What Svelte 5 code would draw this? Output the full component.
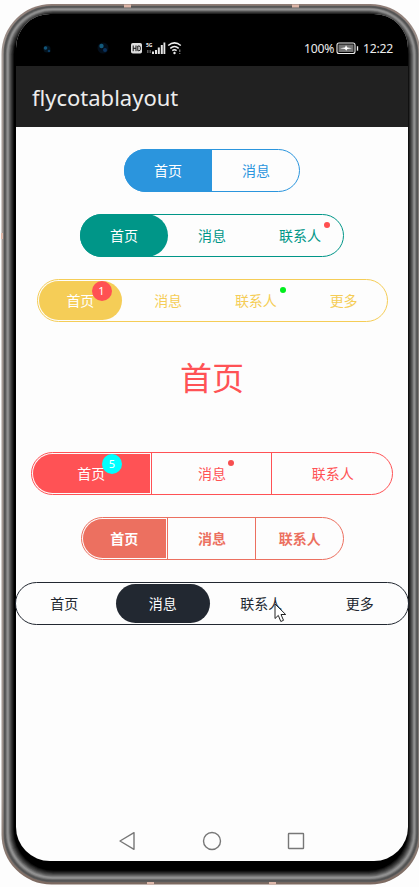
<script>
  const rows = [
    { w: 176, c: '#2b95dd', tabs: ['首页', '消息'], active: 0, inset: 0, shape: 'segment', divider: true },
    { w: 264, c: '#009688', tabs: ['首页', '消息', '联系人'], active: 0, inset: 0, shape: 'pill', marks: { 2: { x: 67.5, color: '#ff4f50' } } },
    { w: 351, c: '#f5cd57', tabs: ['首页', '消息', '联系人', '更多'], active: 0, inset: 2, shape: 'pill',
      marks: { 0: { x: 66, color: '#ff5153', count: 1 }, 2: { x: 67.5, color: '#00ee1c' } } },
    { w: 362, c: '#ff5255', tabs: ['首页', '消息', '联系人'], active: 0, inset: 2, shape: 'segment', divider: true,
      marks: { 0: { x: 82, color: '#00ffff', count: 5 }, 1: { x: 76.5, color: '#f74f50' } } },
    { w: 263, c: '#ec7060', tabs: ['首页', '消息', '联系人'], active: 0, inset: 2, shape: 'segment', divider: true, bold: true },
    { w: 394, c: '#222831', tabs: ['首页', '消息', '联系人', '更多'], active: 1, inset: 2, shape: 'pill' }
  ];

  // Metallic edge, from the outer rim to the black bezel: [inset, brightness]
  const rings = [
    [2, 98], [2.7, 82], [3.5, 88], [4.3, 112], [5.1, 138], [5.9, 148], [6.7, 130], [7.5, 108],
    [8.2, 90], [8.9, 72], [9.6, 58], [10.3, 44], [11, 30], [11.7, 16], [12.4, 0]
  ];
</script>

{#snippet tabBar(row)}
  <div class="bar {row.shape}" class:divided={row.divider} class:bold={row.bold}
    style="width:{row.w}px;--c:{row.c};--inset:{row.inset}px">
    {#each row.tabs as tab, i}
      <div class="tab" class:active={i === row.active}>
        <span>{tab}</span>
        {#if row.marks?.[i]}
          <i class="mark" class:count={row.marks[i].count} style="left:{row.marks[i].x}px;background:{row.marks[i].color}">{row.marks[i].count ?? ''}</i>
        {/if}
      </div>
    {/each}
  </div>
{/snippet}

<div class="stage">
  <svg class="frame" width="419" height="887" viewBox="0 0 419 887">
    <defs>
      <linearGradient id="rim" x1="0" y1="0" x2="0" y2="1">
        <stop offset="0" stop-color="#8d7b74" /><stop offset=".06" stop-color="#a59b96" />
        <stop offset=".9" stop-color="#a0958f" /><stop offset="1" stop-color="#7c6960" />
      </linearGradient>
    </defs>
    <rect x="1.5" y="4" width="419" height="880.5" rx="50" fill="url(#rim)" />
    {#each rings as [d, v]}
      <rect x={1.5 + d} y={4 + d * 0.85} width={419 - d * 2} height={880.5 - d * 1.95} rx={50 - d * 0.8} fill="rgb({v},{v},{v})" />
    {/each}
    <path d="M124 4.5h7v3h-7zM292 4.5h7v3h-7zM147 882h7v2.5h-7zM269 882h7v2.5h-7zM1 233h2v6H1z" fill="#dcb6a8" />
  </svg>

  <div class="phone">
    <header class="status">
      <svg class="lens" width="70" height="20" viewBox="0 0 70 20">
        <circle cx="6" cy="11" r="3.5" fill="#03131f" /><circle cx="4.5" cy="10" r="1.8" fill="#125478" /><circle cx="8" cy="13" r="1.3" fill="#083a62" />
        <circle cx="62" cy="10" r="5.5" fill="#030e1a" /><circle cx="60.5" cy="8" r="2.2" fill="#125a7c" /><circle cx="64" cy="12" r="2" fill="#0a315c" />
      </svg>
      <svg class="signal" width="52" height="14" viewBox="0 0 52 14">
        <rect x="0" y="2" width="11" height="10.5" rx="1.8" fill="#ddd" />
        <path d="M2.2 4.500v5.700M5 4.500v5.700M2.200 7.300H5M6.800 5v4.700h1q1.500 0 1.500-1.200V6.200Q9.300 5 7.800 5z" stroke="#111" stroke-width="1" fill="none" />
        <text x="15" y="5.800" font-size="5.800" font-weight="700" fill="#eee" textLength="6.500" lengthAdjust="spacingAndGlyphs">5G</text>
        <path d="M16 9h1.500v3H16zM18.500 9H20v3h-1.500z" fill="#555" />
        <path d="M21 10.500h2V13h-2zM24 9h2v4h-2zM26.800 6.500h2V13h-2zM29.800 4h2v9h-2zM32.500 1.500h1.800V13h-1.800z" fill="#e5e5e5" />
        <path d="M37.200 4.500q6.300-5.300 12.600 0M39.300 7.300q4.200-3.400 8.400 0M41.300 9.700q2.200-1.700 4.300 0" stroke="#eee" stroke-width="1.500" fill="none" />
        <circle cx="43.500" cy="12" r="1.200" fill="#eee" /><path d="M48.800 8.500v2.500M48.800 12v1" stroke="#999" stroke-width="1" />
      </svg>
      <span class="percent">100%</span>
      <svg class="battery" width="23" height="13" viewBox="0 0 23 13">
        <rect x="1" y="1" width="18" height="10.500" rx="2" fill="#000" stroke="#eee" stroke-width="1.100" />
        <rect x="2.500" y="2.500" width="15" height="7.500" fill="#737373" />
        <path d="M4 6.200l5-.8 1-2.200 1.300 2.200 4.700.8-4.700.8-1 1.800L9 7z" fill="#fff" /><path d="M21.500 4.200v4.500" stroke="#eee" stroke-width="1.300" />
      </svg>
      <span class="clock">12:22</span>
    </header>
    <div class="title"><span>flycotablayout</span></div>
    <main>
      {#each rows.slice(0, 3) as row}{@render tabBar(row)}{/each}
      <div class="page">首页</div>
      {#each rows.slice(3) as row}{@render tabBar(row)}{/each}
    </main>
    <footer>
      <svg width="18" height="20" viewBox="0 0 18 20"><path d="M2 10L16 1.700v16.600z" /></svg>
      <svg width="20" height="20" viewBox="0 0 20 20"><circle cx="10" cy="10" r="8.500" /></svg>
      <svg width="18" height="20" viewBox="0 0 18 20"><rect x="1.500" y="2.500" width="15" height="15" rx=".5" /></svg>
    </footer>
  </div>

  <svg class="cursor" width="14" height="20" viewBox="0 0 14 20">
    <path d="M1 1v14.500l3.300-3.100L6.800 18.500l2.700-1.200L7 11.500h4.700z" fill="#fff" stroke="#222" stroke-width="1" />
  </svg>
</div>

<style>
  .stage {
    position: relative;
    width: 419px;
    height: 887px;
    overflow: hidden;
    box-sizing: border-box;
    padding: 14px 0 0 16px;
    background: #fdfdfd;
    font-family: "Noto Sans", "Noto Sans CJK SC", sans-serif;
  }
  .frame { position: absolute; left: 0; top: 0; }
  .phone {
    position: relative;
    display: flex;
    flex-direction: column;
    width: 392px;
    height: 847px;
    background: #fdfdfd;
    border-radius: 34px;
  }
  .status {
    display: flex;
    align-items: center;
    height: 52px;
    flex: none;
    box-sizing: border-box;
    padding: 16px 14px 0 25px;
    background: #000;
    border-radius: 34px 34px 0 0;
    color: #ededed;
  }
  .lens { margin-right: 20px; }
  .percent, .clock { font-size: 12.2px; letter-spacing: -.25px; white-space: nowrap; }
  .percent { margin-left: auto; width: 31px; }
  .battery { margin: 0 4px 0 1px; }
  .clock { width: 31px; }
  .title {
    height: 61px;
    flex: none;
    display: flex;
    align-items: center;
    background: #212121;
    color: #ededed;
    padding-left: 16px;
    font-size: 22px;
  }
  main {
    flex: 1;
    width: 392px;
    padding-top: 22px;
    display: flex;
    flex-direction: column;
    align-items: center;
    gap: 22px;
  }
  .bar {
    position: relative;
    display: flex;
    height: 43px;
    flex: none;
    border-radius: 22px;
    color: var(--c);
    font: 14px/20px "Noto Sans CJK SC", sans-serif;
  }
  .bar::after {
    content: "";
    position: absolute;
    inset: 0;
    border: 1px solid var(--c);
    border-radius: 22px;
  }
  .tab {
    position: relative;
    flex: 1 1 0;
    display: flex;
    align-items: center;
    justify-content: center;
    padding-bottom: 1px;
  }
  .tab span { position: relative; }
  .divided .tab + .tab { box-shadow: -1px 0 var(--c); }
  .tab.active { color: #fff; }
  .tab.active::before {
    content: "";
    position: absolute;
    inset: var(--inset);
    background: var(--c);
    border-radius: 22px;
  }
  .segment .tab.active::before { border-radius: 22px 0 0 22px; }
  .bold { font-weight: 700; }
  .mark {
    position: absolute;
    top: 7.5px;
    width: 6px;
    height: 6px;
    border-radius: 50%;
  }
  .mark.count {
    top: 2px;
    margin-left: -11px;
    width: 20px;
    height: 20px;
    font: normal 11px/20px "Noto Sans", sans-serif;
    color: #fff;
    text-align: center;
  }
  .page {
    height: 64px;
    margin-bottom: 22px;
    flex: none;
    color: #ff5255;
    font: 32px/64px "Noto Sans CJK SC", sans-serif;
  }
  footer {
    flex: none;
    height: 20px;
    display: flex;
    justify-content: space-between;
    padding: 0 103px 10px 102px;
  }
  footer svg { fill: none; stroke: #777; stroke-width: 1.4; stroke-linejoin: round; }
  .cursor { position: absolute; left: 274px; top: 603px; }
</style>
